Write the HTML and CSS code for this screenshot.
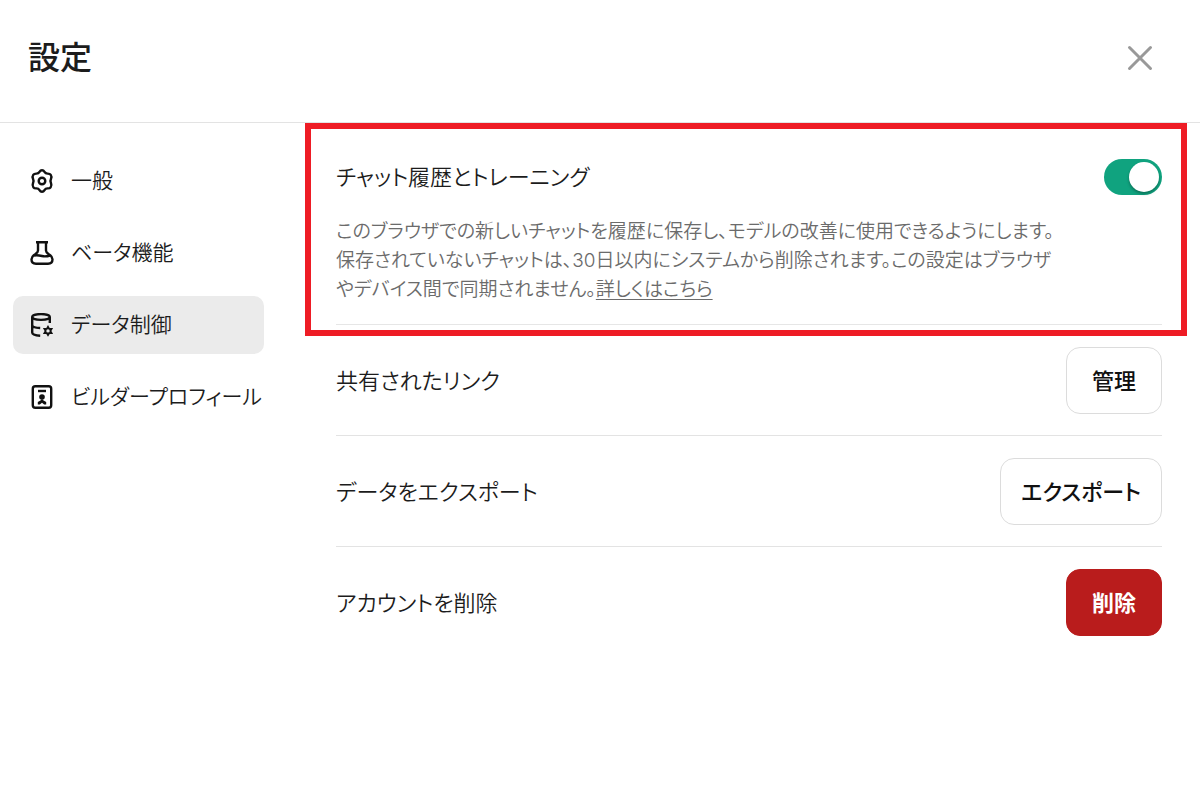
FILE: index.html
```html
<!DOCTYPE html>
<html lang="ja">
<head>
    <meta charset="UTF-8">
    <meta name="viewport" content="width=device-width, initial-scale=1.0">
    <title>設定</title>
    <link rel="stylesheet" href="styles.css">
</head>
<body>
    <header class="header">
        <h1>設定</h1>
        <button type="button" class="close" aria-label="閉じる">
            <svg width="28" height="28" viewBox="0 0 28 28" fill="none" stroke="#999" stroke-width="3" stroke-linecap="round">
                <path d="M3.500 3.500l21 21M24.500 3.500l-21 21"/>
            </svg>
        </button>
    </header>

    <div class="layout">
        <nav class="sidebar">
            <a href="#general" class="tab">
                <svg class="icon" viewBox="0 0 24 24">
                    <path d="M12 1.300c1.300 0 1.900.6 2.500 1.600.7 1.200 1.600 1.700 3 1.700 1.300 0 2.300-.1 3.100 1.100.9 1.400 1.200 2.300.5 3.700-.9 1.800-.9 3.400 0 5.200.7 1.400.4 2.300-.5 3.700-.8 1.200-1.800 1.100-3.100 1.100-1.400 0-2.300.5-3 1.700-.6 1-1.200 1.600-2.500 1.600s-1.900-.6-2.500-1.600c-.7-1.200-1.600-1.700-3-1.700-1.300 0-2.300.1-3.100-1.100-.9-1.400-1.200-2.300-.5-3.700.9-1.800.9-3.400 0-5.200-.7-1.400-.4-2.300.5-3.700.8-1.200 1.800-1.100 3.100-1.100 1.400 0 2.300-.5 3-1.700.6-1 1.200-1.600 2.500-1.600z"/>
                    <circle cx="12" cy="12" r="3.300"/>
                </svg>
                一般
            </a>
            <a href="#beta" class="tab">
                <svg class="icon" viewBox="0 0 24 24">
                    <path d="M6 1.300h12M8 1.300v8.200c0 1.500-.8 2.300-2.500 3.500-2.500 1.500-4 3-4 5.200 0 2.800 1.800 4.500 4.500 4.500h12c2.700 0 4.500-1.700 4.500-4.500 0-2.200-1.500-3.700-4-5.200-1.700-1.200-2.500-2-2.500-3.500V1.300"/>
                    <path d="M4 14.500c3-.8 5-.3 8 .5s5 .5 8-.5"/>
                </svg>
                ベータ機能
            </a>
            <a href="#data" class="tab active">
                <svg class="icon" viewBox="0 0 24 24">
                    <ellipse cx="11" cy="4" rx="8.800" ry="2.900"/>
                    <path d="M2.200 4v15.500c0 2 3.500 3 8 3.200M19.800 4v6M2.200 12c0 2 3.500 2.900 8 3"/>
                    <path class="solid" fill-rule="evenodd" d="M18 12l1.700 2.900h3.400l-1.700 3 1.700 3h-3.400L18 23.800l-1.700-2.900h-3.400l1.700-3-1.700-3h3.400zM18 16.200a1.700 1.700 0 1 0 0 3.400 1.700 1.700 0 1 0 0-3.400z"/>
                </svg>
                データ制御
            </a>
            <a href="#builder" class="tab">
                <svg class="icon" viewBox="0 0 24 24">
                    <rect x="2.800" y="1.300" width="18.400" height="21.400" rx="2.500"/>
                    <path d="M8 6h8"/>
                    <circle class="solid" cx="12" cy="12" r="2.800"/>
                    <path class="solid" d="M12 14l1.200 1.300 3 1.700v2.500h-2L12 17.800l-2.200 1.700h-2V17l3-1.700z"/>
                </svg>
                ビルダープロフィール
            </a>
        </nav>

        <main class="content">
            <section class="history">
                <div class="history-head">
                    <label for="history">チャット履歴とトレーニング</label>
                    <input type="checkbox" role="switch" id="history" class="switch" checked>
                </div>
                <p>
                    このブラウザでの新しいチャットを履歴に保存し、モデルの改善に使用できるようにします。<br>
                    保存されていないチャットは、30日以内にシステムから削除されます。この設定はブラウザ<br>
                    やデバイス間で同期されません。<a href="#more">詳しくはこちら</a>
                </p>
            </section>
            <div class="row">
                <span>共有されたリンク</span>
                <button type="button" class="btn">管理</button>
            </div>
            <div class="row">
                <span>データをエクスポート</span>
                <button type="button" class="btn">エクスポート</button>
            </div>
            <div class="row">
                <span>アカウントを削除</span>
                <button type="button" class="btn danger">削除</button>
            </div>
        </main>
    </div>
</body>
</html>
```

FILE: styles.css
```css
* {
    box-sizing: border-box;
}
body {
    margin: 0;
    background: #fff;
    color: #1c1c1c;
    font-family: Inter, "Noto Sans CJK JP", sans-serif;
    font-size: 22px;
    font-weight: 350;
    line-height: 34px;
    font-feature-settings: "palt";
}
.header {
    display: flex;
    align-items: center;
    justify-content: space-between;
    height: 123px;
    padding: 0 46px 6px 28px;
    border-bottom: 1px solid #e3e3e3;
}
h1 {
    margin: 0;
    font-size: 32px;
    font-weight: 500;
}
.close {
    display: flex;
    padding: 0;
    border: 0;
    background: none;
    cursor: pointer;
}
.layout {
    display: flex;
    align-items: flex-start;
}
.sidebar {
    display: flex;
    flex-direction: column;
    flex: none;
    gap: 14px;
    width: 264px;
    padding: 29px 0 0 13px;
}
.tab {
    display: flex;
    align-items: center;
    gap: 17px;
    padding: 12px 0 12px 17px;
    border-radius: 10px;
    color: inherit;
    font-size: 21px;
    text-decoration: none;
    white-space: nowrap;
}
.tab.active {
    background: #ebebeb;
}
.icon {
    flex: none;
    width: 24px;
    height: 24px;
    fill: none;
    stroke: #111;
    stroke-width: 2.4;
}
.icon .solid {
    fill: #111;
    stroke: none;
}
.content {
    flex: 1;
    padding: 0 38px 0 72px;
}
.history {
    position: relative;
    padding: 36px 0 20px;
    border-bottom: 1px solid #e6e6e6;
}
/* red highlight around the history setting */
.history::after {
    content: "";
    position: absolute;
    inset: 0 -25px -12px -31px;
    border: 6px solid #ee1c25;
    pointer-events: none;
}
.history-head {
    display: flex;
    align-items: center;
    justify-content: space-between;
}
.history p {
    margin: 22px 0 0;
    color: #6b6b6b;
    font-size: 19px;
    line-height: 29px;
    white-space: nowrap;
}
.history a {
    color: inherit;
    text-underline-offset: 3px;
}
.switch {
    appearance: none;
    width: 58px;
    height: 36px;
    margin: 0;
    padding: 3px;
    border-radius: 18px;
    background: #ccc;
    cursor: pointer;
}
.switch::before {
    content: "";
    display: block;
    width: 30px;
    height: 30px;
    border-radius: 50%;
    background: #fff;
    box-shadow: 0 2px 3px rgba(0, 0, 0, 0.3);
}
.switch:checked {
    background: #10a37f;
}
.switch:checked::before {
    margin-left: auto;
}
.row {
    display: flex;
    align-items: center;
    justify-content: space-between;
    padding: 22px 0 21px;
    border-bottom: 1px solid #e3e3e3;
}
.row:last-child {
    border-bottom: 0;
}
.btn {
    min-width: 96px;
    height: 67px;
    padding: 0 20px;
    border: 1px solid #dcdcdc;
    border-radius: 14px;
    background: #fff;
    color: #111;
    font: inherit;
    font-weight: 500;
    cursor: pointer;
}
.btn.danger {
    border-color: #b91c1c;
    background: #b91c1c;
    color: #fff;
    font-weight: 700;
}
```
